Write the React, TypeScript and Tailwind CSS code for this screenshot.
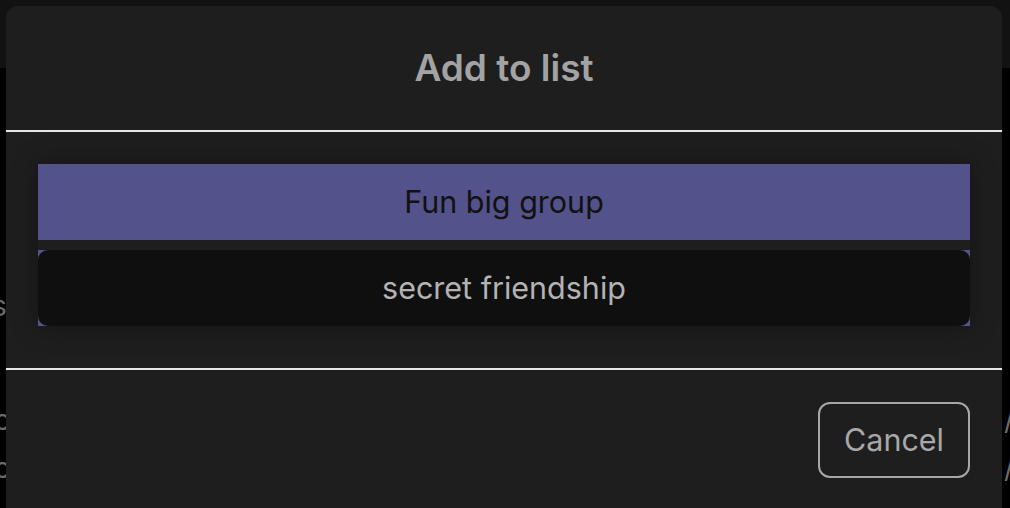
const lists = [
  { name: 'Fun big group', active: true },
  { name: 'secret friendship', active: false },
];

export default function App() {
  return (
    <div
      className="relative h-[508px] w-[1010px] overflow-hidden bg-black"
      style={{ fontFamily: 'Inter, "Noto Sans", sans-serif' }}
    >
      {/* page behind the dialog */}
      <div className="h-[68px] bg-[#121212]" />
      <div className="flex justify-between pt-[224px] text-[28px] leading-none text-[#6b6b6b]">
        <span className="-ml-[8px]">s</span>
      </div>
      <div className="flex justify-between pt-[86px] text-[28px] leading-none text-[#6b6b6b]">
        <span className="-ml-[6px]">c</span>
        <span className="-mr-[4px]">/</span>
      </div>
      <div className="flex justify-between pt-[20px] text-[28px] leading-none text-[#6b6b6b]">
        <span className="-ml-[6px]">c</span>
        <span className="-mr-[4px]">/</span>
      </div>

      {/* dialog */}
      <div className="absolute left-[6px] top-[6px] flex h-[540px] w-[996px] flex-col rounded-t-[12px] bg-[#1e1e1e]">
        <div className="flex h-[126px] items-center justify-center border-b-2 border-[#e6e6e6]">
          <h2 className="text-[37px] font-semibold text-[#a3a3a3]">Add to list</h2>
        </div>

        <div className="px-[32px] pb-[42px] pt-[32px]">
          <ul className="flex flex-col gap-[10px] shadow-[0_0_24px_rgba(0,0,0,0.35)]">
            {lists.map((l) => (
              <li key={l.name} className="bg-[#53528b]">
                <button
                  className={
                    l.active
                      ? 'flex h-[76px] w-full items-center justify-center rounded-[10px] text-[30.5px] text-[#111111]'
                      : 'flex h-[76px] w-full items-center justify-center rounded-[10px] bg-[#0f0f0f] text-[30.5px] text-[#b3b3b3]'
                  }
                >
                  {l.name}
                </button>
              </li>
            ))}
          </ul>
        </div>

        <div className="flex justify-end border-t-2 border-[#e6e6e6] px-[32px] pt-[32px]">
          <button className="flex h-[76px] w-[152px] items-center justify-center rounded-[12px] border-2 border-[#a8a8a8] text-[30.5px] text-[#a8a8a8]">
            Cancel
          </button>
        </div>
      </div>
    </div>
  );
}
